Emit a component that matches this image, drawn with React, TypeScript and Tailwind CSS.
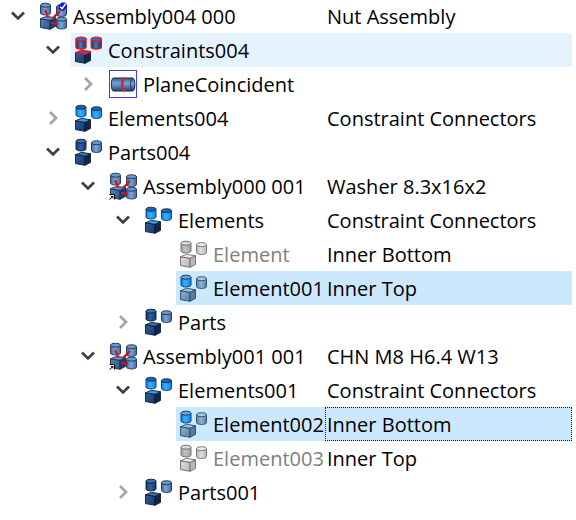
import { useId } from "react";

type IconKind =
  | "root"
  | "assembly"
  | "constraints"
  | "coincident"
  | "elements"
  | "parts"
  | "element"
  | "hidden";

type Row = {
  level: 0 | 1 | 2 | 3 | 4;
  label: string;
  note?: string;
  icon: IconKind;
  open?: boolean;
  hover?: boolean;
  selected?: boolean;
  focused?: boolean;
};

const rows: Row[] = [
  { level: 0, label: "Assembly004 000", note: "Nut Assembly", icon: "root", open: true },
  { level: 1, label: "Constraints004", icon: "constraints", open: true, hover: true },
  { level: 2, label: "PlaneCoincident", icon: "coincident", open: false },
  { level: 1, label: "Elements004", note: "Constraint Connectors", icon: "elements", open: false },
  { level: 1, label: "Parts004", icon: "parts", open: true },
  { level: 2, label: "Assembly000 001", note: "Washer 8.3x16x2", icon: "assembly", open: true },
  { level: 3, label: "Elements", note: "Constraint Connectors", icon: "elements", open: true },
  { level: 4, label: "Element", note: "Inner Bottom", icon: "hidden" },
  { level: 4, label: "Element001", note: "Inner Top", icon: "element", selected: true },
  { level: 3, label: "Parts", icon: "parts", open: false },
  { level: 2, label: "Assembly001 001", note: "CHN M8 H6.4 W13", icon: "assembly", open: true },
  { level: 3, label: "Elements001", note: "Constraint Connectors", icon: "elements", open: true },
  { level: 4, label: "Element002", note: "Inner Bottom", icon: "element", selected: true, focused: true },
  { level: 4, label: "Element003", note: "Inner Top", icon: "hidden" },
  { level: 3, label: "Parts001", icon: "parts", open: false },
];

const indent = ["pl-0", "pl-[35px]", "pl-[70px]", "pl-[105px]", "pl-[140px]"];

type Tone = { dark: string; mid: string; top: string; line: string };

const steel: Tone = { dark: "#3f69a0", mid: "#7fa6d6", top: "#6b97cd", line: "#1c3150" };
const navy: Tone = { dark: "#173668", mid: "#2f5ea6", top: "#3b6cb0", line: "#0e1c33" };
const bright: Tone = { dark: "#0784ee", mid: "#35b0ff", top: "#2462a8", line: "#10305a" };
const pale: Tone = { dark: "#567fa6", mid: "#8db4d6", top: "#a3c5e2", line: "#2b4763" };
const grey: Tone = { dark: "#b8b8b8", mid: "#dedede", top: "#ececec", line: "#6c6c6c" };
const silver: Tone = { dark: "#a0a0a0", mid: "#c2c2c2", top: "#dadada", line: "#666666" };

function Cylinder({ x, y, tone, rim }: { x: number; y: number; tone: Tone; rim?: string }) {
  const id = useId();
  return (
    <g transform={`translate(${x} ${y})`}>
      <linearGradient id={id}>
        <stop offset="0" stopColor={tone.dark} />
        <stop offset="0.45" stopColor={tone.mid} />
        <stop offset="1" stopColor={tone.dark} />
      </linearGradient>
      <path
        d="M0 2.2V10C0 12.6 10 12.6 10 10V2.2Z"
        fill={`url(#${id})`}
        stroke={rim ?? tone.line}
        strokeWidth={rim ? 1.4 : 0.9}
      />
      <ellipse cx="5" cy="2.2" rx="5" ry="2" fill={tone.top} stroke={rim ?? tone.line} strokeWidth={rim ? 1.2 : 0.9} />
    </g>
  );
}

function Cube({ tone, face, lid, rim }: { tone: Tone; face?: string; lid?: string; rim?: string }) {
  const id = useId();
  return (
    <g strokeLinejoin="round" strokeWidth="0.9" stroke={tone.line}>
      <linearGradient id={id} x2="1" y2="1">
        <stop offset="0" stopColor={tone.mid} />
        <stop offset="1" stopColor={tone.dark} />
      </linearGradient>
      <path d="M1.5 16.8L11 18.3V27.3L1.5 25.6Z" fill={`url(#${id})`} />
      <path d="M11 18.3L16.5 15.8V24.4L11 27.3Z" fill={face ?? tone.dark} />
      <path d="M1.5 16.8L7.5 14.3L16.5 15.8L11 18.3Z" fill={lid ?? tone.top} stroke={rim ?? tone.line} strokeWidth={rim ? 1.4 : 0.9} />
    </g>
  );
}

function Assembly({ root }: { root?: boolean }) {
  return (
    <>
      <Cylinder x={1.5} y={1} tone={steel} />
      <Cylinder x={17.5} y={2.5} tone={steel} />
      <Cube tone={{ ...steel, mid: "#5584bd", dark: "#2b5288" }} face="#1e3d6c" />
      <Cylinder x={17.5} y={15} tone={steel} />
      <g stroke="#d3141c" strokeWidth="2.2" strokeLinecap="round">
        <path d="M6.5 9L9 14.8" />
        <path d="M20.5 9.5L14.6 15.4" />
        <path d="M13 21.2L18 21.8" />
      </g>
      {root ? (
        <>
          <path d="M19.5 4L22.5 0.5H26L28 2.5V5L24 9.3L20 7.5Z" fill="#0a10f0" />
          <path d="M21.2 4.8L23.2 6.6L26.6 1.8" fill="none" stroke="#fff" strokeWidth="1.6" />
        </>
      ) : (
        <>
          <path d="M0 22H6V28H0Z" fill="#fff" />
          <path d="M0.5 22.5H5.5V27.5M2 24.5H4V26.5M4 24.5L0.5 27.5" fill="none" stroke="#000" />
        </>
      )}
    </>
  );
}

function Coincident() {
  const id = useId();
  return (
    <>
      <linearGradient id={id} x2="0" y2="1">
        <stop offset="0" stopColor="#315c95" />
        <stop offset="0.4" stopColor="#78a3d6" />
        <stop offset="1" stopColor="#24467a" />
      </linearGradient>
      <rect x="0.5" y="0.5" width="27" height="27" fill="#fff" stroke="#3f3fe8" />
      <path d="M4.5 8H23.5C26.7 8 26.7 21 23.5 21H4.5C1.6 21 1.6 8 4.5 8Z" fill={`url(#${id})`} stroke="#14263f" />
      <path d="M23.3 8.3C20.8 10.5 20.8 19 23.3 20.8" fill="none" stroke="#14263f" strokeWidth="0.8" />
      <path d="M15.4 7.8C12.4 10.5 12.4 19 15.4 21.3" fill="none" stroke="#e0202a" strokeWidth="2.6" />
    </>
  );
}

function Glyph({ kind }: { kind: IconKind }) {
  switch (kind) {
    case "root":
      return <Assembly root />;
    case "assembly":
      return <Assembly />;
    case "coincident":
      return <Coincident />;
    case "constraints":
      return (
        <>
          <Cylinder x={2} y={1} tone={{ ...navy, mid: "#4a76ac" }} rim="#dd1620" />
          <Cylinder x={17.3} y={1} tone={{ ...navy, mid: "#4a76ac" }} rim="#dd1620" />
          <Cube tone={navy} face="#10264d" lid="#41699e" rim="#dd1620" />
        </>
      );
    case "elements":
      return (
        <>
          <Cylinder x={2} y={1} tone={bright} />
          <Cylinder x={17.5} y={2.5} tone={bright} />
          <Cube tone={navy} face="#10264d" lid="#29a3ee" />
        </>
      );
    case "parts":
      return (
        <>
          <Cylinder x={2} y={1} tone={navy} />
          <Cylinder x={17.5} y={2.5} tone={steel} />
          <Cube tone={navy} face="#10264d" />
        </>
      );
    case "element":
      return (
        <>
          <Cylinder x={2} y={1} tone={{ ...bright, top: "#70a9d8" }} />
          <Cylinder x={17.5} y={2.5} tone={pale} />
          <Cube tone={pale} />
        </>
      );
    case "hidden":
      return (
        <>
          <Cylinder x={2} y={1} tone={silver} />
          <Cylinder x={17.5} y={2.5} tone={grey} />
          <Cube tone={grey} />
        </>
      );
  }
}

function Toggle({ open, label }: { open?: boolean; label: string }) {
  if (open === undefined) return <span className="w-9 shrink-0" />;
  return (
    <button
      type="button"
      aria-expanded={open}
      aria-label={`Toggle ${label}`}
      className="flex h-full w-9 shrink-0 items-center justify-center"
    >
      <svg viewBox="0 0 16 16" className="size-4" fill="none" strokeWidth="2.8">
        {open ? <path d="M2 4.6L8 10.4L14 4.6" stroke="#414141" /> : <path d="M5 2L11 8L5 14" stroke="#a6a6a6" />}
      </svg>
    </button>
  );
}

function TreeRow({ row }: { row: Row }) {
  const fill = row.selected ? "bg-[#cce8ff]" : row.hover ? "bg-[#e5f3ff]" : "";
  return (
    <tr aria-level={row.level + 1} aria-selected={!!row.selected}>
      <td className="p-0">
        <div className={`flex h-[34px] ${indent[row.level]}`}>
          <Toggle open={row.open} label={row.label} />
          <div className={`flex min-w-0 flex-1 items-center gap-1.5 pl-[3px] ${fill}`}>
            <svg viewBox="0 0 28 28" className="size-7 shrink-0" aria-hidden="true">
              <Glyph kind={row.icon} />
            </svg>
            <span className={`whitespace-nowrap pt-0.5 leading-8 ${row.icon === "hidden" ? "text-[#808080]" : ""}`}>
              {row.label}
            </span>
          </div>
        </div>
      </td>
      <td className="p-0">
        <div
          className={`flex h-[34px] items-center border border-dotted pl-px ${fill} ${
            row.focused ? "border-[#10202e]" : "border-transparent"
          }`}
        >
          <span className="whitespace-nowrap pt-0.5 leading-8">{row.note}</span>
        </div>
      </td>
    </tr>
  );
}

export default function App() {
  return (
    <main className="overflow-hidden bg-white pr-1 pb-2 font-['Open_Sans','Noto_Sans',sans-serif] text-[20px] text-black">
      <table role="treegrid" aria-label="Model tree" className="-mt-px w-full table-fixed border-collapse">
        <colgroup>
          <col className="w-[325px]" />
          <col />
        </colgroup>
        <tbody>
          {rows.map((row) => (
            <TreeRow key={row.label} row={row} />
          ))}
        </tbody>
      </table>
    </main>
  );
}
